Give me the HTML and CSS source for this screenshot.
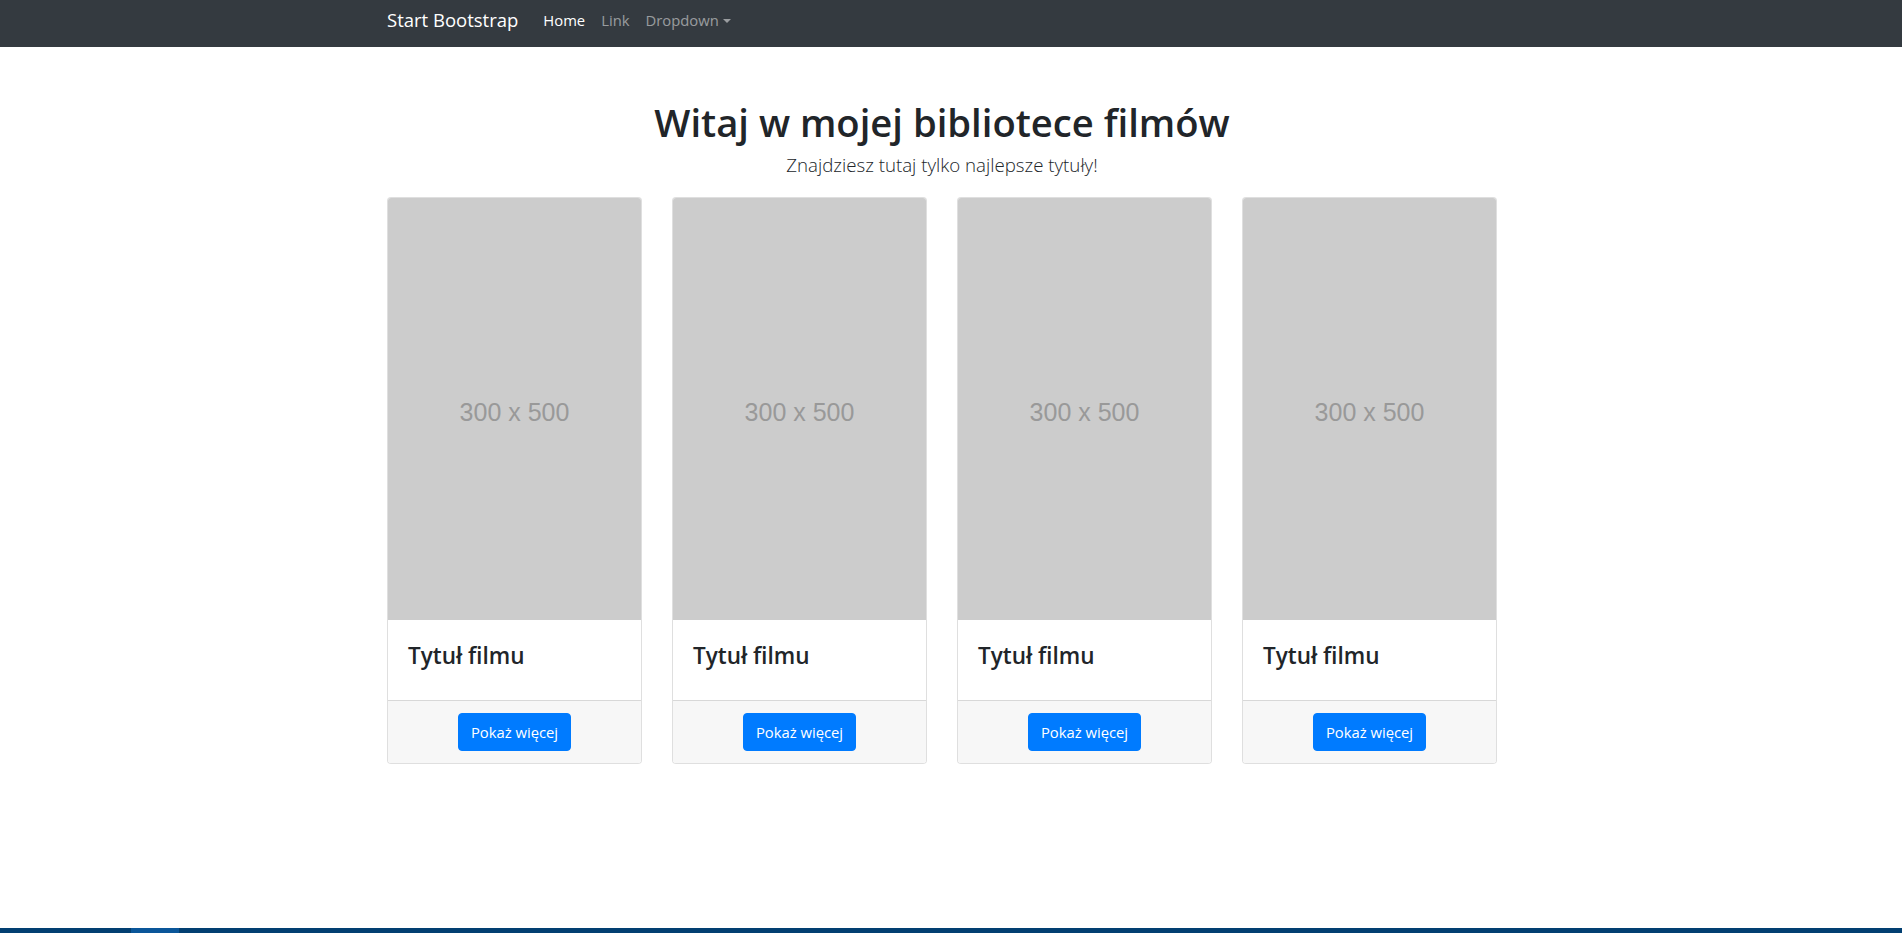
FILE: index.html
```html
<!DOCTYPE html>
<html lang="pl">
<head>
<meta charset="utf-8">
<title>Start Bootstrap</title>
<link rel="stylesheet" href="styles.css">
</head>
<body>
<nav class="navbar">
  <div class="shift">
    <div class="container nav-inner">
      <a class="brand" href="#">Start Bootstrap</a>
      <ul class="nav-links">
        <li><a class="nav-link active" href="#">Home</a></li>
        <li><a class="nav-link" href="#">Link</a></li>
        <li><a class="nav-link dropdown" href="#">Dropdown<span class="caret"></span></a></li>
      </ul>
    </div>
  </div>
</nav>
<main class="shift">
  <div class="container">
    <h1 class="title">Witaj w mojej bibliotece filmów</h1>
    <p class="lead">Znajdziesz tutaj tylko najlepsze tytuły!</p>
    <div class="cards">
      <div class="card">
        <div class="poster"><span>300 x 500</span></div>
        <div class="card-body"><h4 class="card-title">Tytuł filmu</h4></div>
        <div class="card-footer"><a class="btn" href="#">Pokaż więcej</a></div>
      </div>
      <div class="card">
        <div class="poster"><span>300 x 500</span></div>
        <div class="card-body"><h4 class="card-title">Tytuł filmu</h4></div>
        <div class="card-footer"><a class="btn" href="#">Pokaż więcej</a></div>
      </div>
      <div class="card">
        <div class="poster"><span>300 x 500</span></div>
        <div class="card-body"><h4 class="card-title">Tytuł filmu</h4></div>
        <div class="card-footer"><a class="btn" href="#">Pokaż więcej</a></div>
      </div>
      <div class="card">
        <div class="poster"><span>300 x 500</span></div>
        <div class="card-body"><h4 class="card-title">Tytuł filmu</h4></div>
        <div class="card-footer"><a class="btn" href="#">Pokaż więcej</a></div>
      </div>
    </div>
  </div>
</main>
<div class="taskbar"><span class="taskbar-active"></span></div>
</body>
</html>
```

FILE: styles.css
```css
* { box-sizing: border-box; }

html, body {
  margin: 0;
  padding: 0;
  background: #fff;
}

body {
  font-family: "Open Sans", "Noto Sans", "Liberation Sans", sans-serif;
  color: #212529;
  font-size: 15px;
}

a { text-decoration: none; }

.shift {
  padding-right: 18px;
}

.container {
  width: 1140px;
  margin: 0 auto;
  padding: 0 15px;
}

/* navbar */
.navbar {
  background: #343a40;
  height: 47px;
}

.nav-inner {
  display: flex;
  align-items: center;
  height: 47px;
}

.brand {
  color: #fff;
  font-size: 18.5px;
  line-height: 26px;
  margin-right: 17px;
  margin-top: -7px;
}

.nav-links {
  display: flex;
  list-style: none;
  margin: -7px 0 0 0;
  padding: 0;
}

.nav-link {
  display: block;
  padding: 0 8px;
  font-size: 14.8px;
  line-height: 22px;
  color: rgba(255, 255, 255, 0.5);
}

.nav-link.active {
  color: #fff;
}

.caret {
  display: inline-block;
  margin-left: 4px;
  vertical-align: 3px;
  border-top: 4.5px solid rgba(255, 255, 255, 0.5);
  border-left: 4px solid transparent;
  border-right: 4px solid transparent;
}

/* heading */
.title {
  margin: 52px 0 0 0;
  text-align: center;
  font-size: 38.2px;
  line-height: 46px;
  font-weight: 600;
  color: #212529;
}

.lead {
  margin: 6px 0 0 0;
  text-align: center;
  font-size: 18.7px;
  line-height: 28px;
  font-weight: 300;
  color: #212529;
}

/* cards */
.cards {
  display: grid;
  grid-template-columns: repeat(4, 255px);
  column-gap: 30px;
  margin-top: 18px;
}

.card {
  border: 1px solid rgba(0, 0, 0, 0.125);
  border-radius: 4px;
  overflow: hidden;
  background: #fff;
}

.poster {
  height: 422px;
  background: #cccccc;
  display: flex;
  align-items: center;
  justify-content: center;
}

.poster span {
  font-family: "Liberation Sans", Arial, sans-serif;
  font-size: 25px;
  color: #999999;
  margin-top: 6px;
}

.card-body {
  height: 80px;
  padding: 22px 20px 0 20px;
}

.card-title {
  margin: 0;
  font-size: 22.5px;
  line-height: 28px;
  font-weight: 600;
  color: #212529;
}

.card-footer {
  border-top: 1px solid rgba(0, 0, 0, 0.125);
  background: #f7f7f7;
  padding: 12px 20px;
  text-align: center;
}

.btn {
  display: inline-block;
  background: #007bff;
  color: #fff;
  border: 1px solid #007bff;
  border-radius: 4px;
  padding: 6px 12px;
  font-size: 14.8px;
  line-height: 24px;
}

/* taskbar strip */
.taskbar {
  position: fixed;
  left: 0;
  right: 0;
  bottom: 0;
  height: 5px;
  background: #023f71;
}

.taskbar-active {
  position: absolute;
  left: 131px;
  top: 0;
  width: 48px;
  height: 5px;
  background: #0a5699;
}
```
